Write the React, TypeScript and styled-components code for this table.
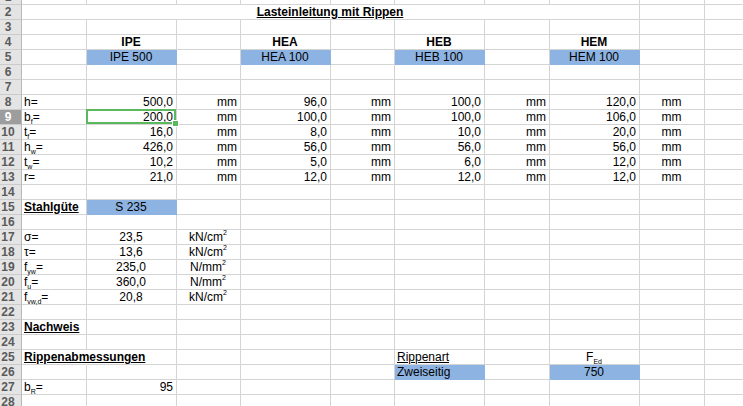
import React, { ReactNode } from "react";
import styled, { createGlobalStyle, css } from "styled-components";

const GRID = "#d4d4d4";
const FILL = "#8db3e2";
const GREEN = "#5cb85c";

const GlobalStyle = createGlobalStyle`
  html, body {
    margin: 0;
    padding: 0;
    background: #ffffff;
  }
  body {
    font-family: "Liberation Sans", Arial, sans-serif;
    font-size: 12px;
    color: #000;
  }
`;

type Align = "left" | "center" | "right";

interface CellSpec {
  text?: ReactNode;
  align?: Align;
  bold?: boolean;
  under?: boolean;
  fill?: boolean;
  span?: number;
  spill?: boolean;
  selected?: boolean;
}

const Viewport = styled.div`
  width: 743px;
  height: 406px;
  overflow: hidden;
  background: #fff;
`;

const Sheet = styled.div`
  display: grid;
  grid-template-columns: 22px 65px 90px 64px 90px 64px 90px 65px 90px 65px 1fr;
  grid-auto-rows: 15px;
  margin-top: -10px;
`;

const RowHead = styled.div<{ $active?: boolean }>`
  box-sizing: border-box;
  height: 15px;
  padding-right: 5px;
  line-height: 15px;
  text-align: center;
  font-weight: 700;
  font-size: 12px;
  color: ${(p) => (p.$active ? "#ffffff" : "#5a5a5a")};
  background: ${(p) => (p.$active ? "#9d9d9d" : "#e4e4e4")};
  border-right: 1px solid #b9b9b9;
  border-bottom: 1px solid #cbcbcb;
  overflow: hidden;
  white-space: nowrap;
`;

const Cell = styled.div<{
  $align: Align;
  $bold?: boolean;
  $under?: boolean;
  $fill?: boolean;
  $span: number;
  $spill?: boolean;
  $last?: boolean;
  $selected?: boolean;
}>`
  position: relative;
  box-sizing: border-box;
  height: 15px;
  padding: 0 3px 0 2px;
  grid-column: span ${(p) => p.$span};
  line-height: 15px;
  white-space: nowrap;
  text-align: ${(p) => p.$align};
  font-weight: ${(p) => (p.$bold ? 700 : 400)};
  text-decoration: ${(p) => (p.$under ? "underline" : "none")};
  background: ${(p) => (p.$fill ? FILL : "transparent")};
  border-bottom: 1px solid ${(p) => (p.$fill ? FILL : GRID)};
  border-right: 1px solid
    ${(p) => (p.$last || p.$spill ? "transparent" : p.$fill ? FILL : GRID)};
  ${(p) =>
    p.$selected &&
    css`
      &::after {
        content: "";
        position: absolute;
        left: -1px;
        top: -1px;
        right: 0;
        bottom: 0;
        border: 2px solid ${GREEN};
        pointer-events: none;
      }
    `}
`;

const Handle = styled.span`
  position: absolute;
  right: -3px;
  bottom: -3px;
  width: 5px;
  height: 5px;
  background: ${GREEN};
  border: 1px solid #ffffff;
  z-index: 2;
`;

const Sub = styled.span`
  font-size: 7px;
  line-height: 0;
  vertical-align: -3px;
`;

const Sup = styled.span`
  font-size: 7px;
  line-height: 0;
  vertical-align: 6px;
`;

const mm: CellSpec = { text: "mm", align: "right" };
const mmC: CellSpec = { text: "mm", align: "center" };

const dims = (label: ReactNode, b: string, d: string, f: string, h: string): Record<number, CellSpec> => ({
  0: { text: label },
  1: { text: b, align: "right" },
  2: mm,
  3: { text: d, align: "right" },
  4: mm,
  5: { text: f, align: "right" },
  6: mm,
  7: { text: h, align: "right" },
  8: mmC,
});

const steel = (label: ReactNode, value: string, unit: ReactNode): Record<number, CellSpec> => ({
  0: { text: label },
  1: { text: value, align: "center" },
  2: { text: unit, align: "center" },
});

const kNcm = (
  <>
    kN/cm<Sup>2</Sup>
  </>
);
const Nmm = (
  <>
    N/mm<Sup>2</Sup>
  </>
);

const rows: Record<number, Record<number, CellSpec>> = {
  2: { 0: { text: "Lasteinleitung mit Rippen", bold: true, under: true, align: "center", span: 8 } },
  4: {
    1: { text: "IPE", bold: true, align: "center" },
    3: { text: "HEA", bold: true, align: "center" },
    5: { text: "HEB", bold: true, align: "center" },
    7: { text: "HEM", bold: true, align: "center" },
  },
  5: {
    1: { text: "IPE 500", align: "center", fill: true },
    3: { text: "HEA 100", align: "center", fill: true },
    5: { text: "HEB 100", align: "center", fill: true },
    7: { text: "HEM 100", align: "center", fill: true },
  },
  8: dims("h=", "500,0", "96,0", "100,0", "120,0"),
  9: dims(
    <>
      b<Sub>f</Sub>=
    </>,
    "200,0",
    "100,0",
    "100,0",
    "106,0"
  ),
  10: dims(
    <>
      t<Sub>f</Sub>=
    </>,
    "16,0",
    "8,0",
    "10,0",
    "20,0"
  ),
  11: dims(
    <>
      h<Sub>w</Sub>=
    </>,
    "426,0",
    "56,0",
    "56,0",
    "56,0"
  ),
  12: dims(
    <>
      t<Sub>w</Sub>=
    </>,
    "10,2",
    "5,0",
    "6,0",
    "12,0"
  ),
  13: dims("r=", "21,0", "12,0", "12,0", "12,0"),
  15: {
    0: { text: "Stahlgüte", bold: true, under: true },
    1: { text: "S 235", align: "center", fill: true },
  },
  17: steel("σ=", "23,5", kNcm),
  18: steel("τ=", "13,6", kNcm),
  19: steel(
    <>
      f<Sub>yw</Sub>=
    </>,
    "235,0",
    Nmm
  ),
  20: steel(
    <>
      f<Sub>u</Sub>=
    </>,
    "360,0",
    Nmm
  ),
  21: steel(
    <>
      f<Sub>vw,d</Sub>=
    </>,
    "20,8",
    kNcm
  ),
  23: { 0: { text: "Nachweis", bold: true, under: true } },
  25: {
    0: { text: "Rippenabmessungen", bold: true, under: true, spill: true },
    5: { text: "Rippenart", under: true },
    7: {
      text: (
        <>
          F<Sub>Ed</Sub>
        </>
      ),
      align: "center",
    },
  },
  26: {
    5: { text: "Zweiseitig", fill: true },
    7: { text: "750", align: "center", fill: true },
  },
  27: {
    0: {
      text: (
        <>
          b<Sub>R</Sub>=
        </>
      ),
    },
    1: { text: "95", align: "right" },
  },
};

const SELECTED_ROW = 9;
const SELECTED_COL = 1;

const SheetRow = ({ n }: { n: number }) => {
  const specs = rows[n] || {};
  const cells: ReactNode[] = [];
  let col = 0;
  while (col < 10) {
    const spec = specs[col] || {};
    const span = spec.span || 1;
    const selected = n === SELECTED_ROW && col === SELECTED_COL;
    cells.push(
      <Cell
        key={col}
        $align={spec.align || "left"}
        $bold={spec.bold}
        $under={spec.under}
        $fill={spec.fill}
        $span={span}
        $spill={spec.spill}
        $last={col + span >= 10}
        $selected={selected}
      >
        {spec.text}
        {selected && <Handle />}
      </Cell>
    );
    col += span;
  }
  return (
    <>
      <RowHead $active={n === SELECTED_ROW}>{n}</RowHead>
      {cells}
    </>
  );
};

export default function App() {
  const rowNumbers = Array.from({ length: 28 }, (_, i) => i + 1);
  return (
    <Viewport>
      <GlobalStyle />
      <Sheet>
        {rowNumbers.map((n) => (
          <SheetRow key={n} n={n} />
        ))}
      </Sheet>
    </Viewport>
  );
}
